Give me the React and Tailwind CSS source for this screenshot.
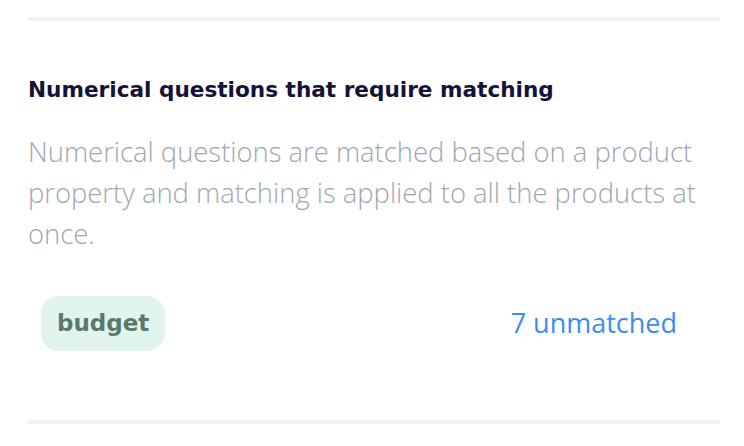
export default function App() {
  return (
    <div className="w-[744px] h-[446px] bg-white px-[28px] pt-[17px]">
      <div className="h-[4px] w-[692px] rounded-full bg-[#eef3f8]" />
      <div className="pt-[55px]">
        <h2 className="text-[21.6px] leading-[28px] font-bold text-[#15123a] font-['DejaVu_Sans',sans-serif]">
          Numerical questions that require matching
        </h2>
        <p className="mt-[27px] text-[27.4px] leading-[41px] text-[#a0a8af] font-['Open_Sans',sans-serif] font-light">
          Numerical questions are matched based on a product
          <br />
          property and matching is applied to all the products at
          <br />
          once.
        </p>
        <div className="mt-[42px] flex items-center justify-between pl-[13px] pr-[39px]">
          <span className="inline-flex h-[55px] items-center rounded-[18px] bg-[#e2f4ee] px-[16px] text-[23px] font-bold text-[#587a69] font-['DejaVu_Sans',sans-serif]">
            budget
          </span>
          <span className="text-[27px] text-[#3a8ef2] font-['Open_Sans',sans-serif]">
            7 unmatched
          </span>
        </div>
      </div>
      <div className="mt-[69px] h-[4px] w-[692px] rounded-full bg-[#eef3f8]" />
    </div>
  );
}
